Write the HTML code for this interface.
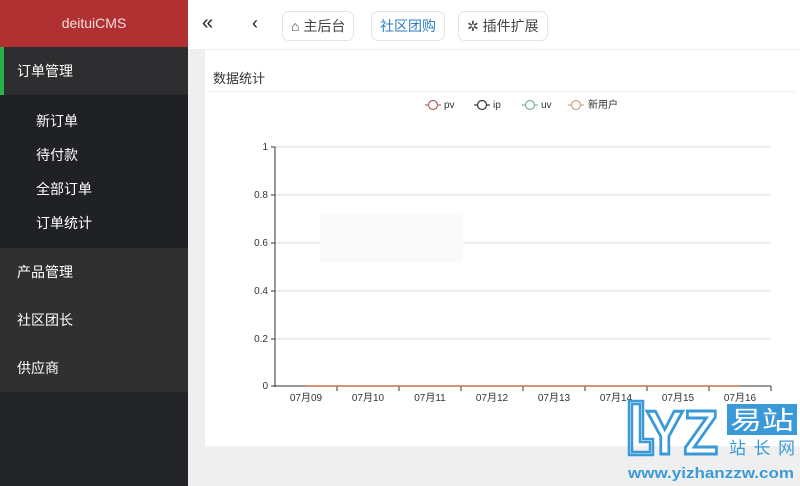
<!DOCTYPE html>
<html><head><meta charset="utf-8"><style>
*{margin:0;padding:0;box-sizing:border-box}
body{width:800px;height:486px;overflow:hidden;background:#efefef;font-family:"Liberation Sans","Noto Sans CJK SC",sans-serif;position:relative}
.side{position:absolute;left:0;top:0;width:188px;height:486px;background:#222428}
.logo{height:47px;background:#b03132;color:#f3dcdc;font-size:14px;text-align:center;line-height:47px}
.m1{height:48px;background:#2e2e30;color:#fff;font-size:14px;line-height:48px;border-left:4px solid #2ab24a;padding-left:13px}
.sub{background:#1f2125;height:153px;padding-top:9px}
.sub div{height:34px;line-height:34px;padding-left:36px;color:#fff;font-size:14px}
.grp{background:#303030;height:144px}
.grp div{height:48px;line-height:48px;padding-left:17px;color:#fff;font-size:14px}
.top{position:absolute;left:188px;top:0;right:0;height:50px;background:#fff;border-bottom:1px solid #eee}
.t{position:absolute;top:11px;height:30px;border:1px solid #e4e4e4;border-radius:7px;font-size:14px;line-height:28px;color:#333;padding:0 8px}
.card{position:absolute;left:205px;top:50px;width:595px;height:396px;background:#fff}
.wm{position:absolute;left:626px;top:398px}
</style></head><body>
<div class="side">
<div class="logo">deituiCMS</div>
<div class="m1">订单管理</div>
<div class="sub"><div>新订单</div><div>待付款</div><div>全部订单</div><div>订单统计</div></div>
<div class="grp"><div>产品管理</div><div>社区团长</div><div>供应商</div></div>
</div>
<div class="top">
<div style="position:absolute;left:14px;top:12px;font-size:20px;color:#222">«</div>
<div style="position:absolute;left:64px;top:13px;font-size:18px;color:#222">‹</div>
<div class="t" style="left:94px;color:#444">⌂ 主后台</div>
<div class="t" style="left:183px;color:#2f7fc0">社区团购</div>
<div class="t" style="left:270px;color:#444">✲ 插件扩展</div>
</div>
<div class="card">
<div style="position:absolute;left:8px;top:18px;font-size:13px;color:#333">数据统计</div>
<div style="position:absolute;left:3px;top:41px;right:5px;border-top:1px solid #eee"></div>
<svg style="position:absolute;left:0;top:0" width="595" height="396" font-family="Liberation Sans,Noto Sans CJK SC,sans-serif" font-size="10" fill="#333">
<g stroke-width="1.2" fill="#fff">
<line x1="220" y1="55" x2="236" y2="55" stroke="#b06464"/><circle cx="228" cy="55" r="4.5" stroke="#b06464"/>
<line x1="269" y1="55" x2="285" y2="55" stroke="#333"/><circle cx="277" cy="55" r="4.5" stroke="#333"/>
<line x1="317" y1="55" x2="333" y2="55" stroke="#7ab0a8"/><circle cx="325" cy="55" r="4.5" stroke="#7ab0a8"/>
<line x1="363" y1="55" x2="379" y2="55" stroke="#d0a080"/><circle cx="371" cy="55" r="4.5" stroke="#d0a080"/>
</g>
<text x="239" y="58">pv</text><text x="288" y="58">ip</text><text x="336" y="58">uv</text><text x="383" y="58">新用户</text>
<g stroke="#ddd"><line x1="70" y1="97" x2="566" y2="97"/><line x1="70" y1="145" x2="566" y2="145"/><line x1="70" y1="193" x2="566" y2="193"/><line x1="70" y1="241" x2="566" y2="241"/><line x1="70" y1="289" x2="566" y2="289"/></g>
<rect x="115" y="165" width="143" height="48" fill="#fafafa"/>
<g stroke="#333"><line x1="70" y1="97" x2="70" y2="337"/><line x1="70" y1="336" x2="566" y2="336"/>
<line x1="66" y1="97" x2="70" y2="97"/><line x1="66" y1="145" x2="70" y2="145"/><line x1="66" y1="193" x2="70" y2="193"/><line x1="66" y1="241" x2="70" y2="241"/><line x1="66" y1="289" x2="70" y2="289"/><line x1="66" y1="336" x2="70" y2="336"/>
<line x1="132" y1="336" x2="132" y2="341"/><line x1="194" y1="336" x2="194" y2="341"/><line x1="256" y1="336" x2="256" y2="341"/><line x1="318" y1="336" x2="318" y2="341"/><line x1="380" y1="336" x2="380" y2="341"/><line x1="442" y1="336" x2="442" y2="341"/><line x1="504" y1="336" x2="504" y2="341"/><line x1="566" y1="336" x2="566" y2="341"/></g>
<line x1="101" y1="336" x2="535" y2="336" stroke="#c8704a" stroke-width="1.5"/>
<g text-anchor="end"><text x="63" y="100">1</text><text x="63" y="148">0.8</text><text x="63" y="196">0.6</text><text x="63" y="244">0.4</text><text x="63" y="292">0.2</text><text x="63" y="339">0</text></g>
<g text-anchor="middle"><text x="101" y="351">07月09</text><text x="163" y="351">07月10</text><text x="225" y="351">07月11</text><text x="287" y="351">07月12</text><text x="349" y="351">07月13</text><text x="411" y="351">07月14</text><text x="473" y="351">07月15</text><text x="535" y="351">07月16</text></g>
</svg>
</div>
<svg class="wm" width="174" height="88" font-family="Liberation Sans,Noto Sans CJK SC,sans-serif">
<path d="M3 3h14v38h10v16H3z M6 6v48h18v-10h-10V6z" fill="none" stroke="#3a9ad9" stroke-width="2.5"/>
<text x="20" y="56" font-size="62" font-weight="bold" fill="#fff" stroke="#3a9ad9" stroke-width="3" textLength="72" lengthAdjust="spacingAndGlyphs">YZ</text>
<rect x="101" y="6" width="70" height="31" fill="#3a9ad9"/>
<text x="104" y="31" font-size="25" fill="#fff" textLength="64" lengthAdjust="spacingAndGlyphs">易站</text>
<text x="103" y="56" font-size="17" fill="#3a9ad9" textLength="66" lengthAdjust="spacing">站长网</text>
<text x="2" y="80" font-size="15" font-weight="bold" fill="#3a9ad9" textLength="166" lengthAdjust="spacingAndGlyphs">www.yizhanzzw.com</text>
</svg>
</body></html>
